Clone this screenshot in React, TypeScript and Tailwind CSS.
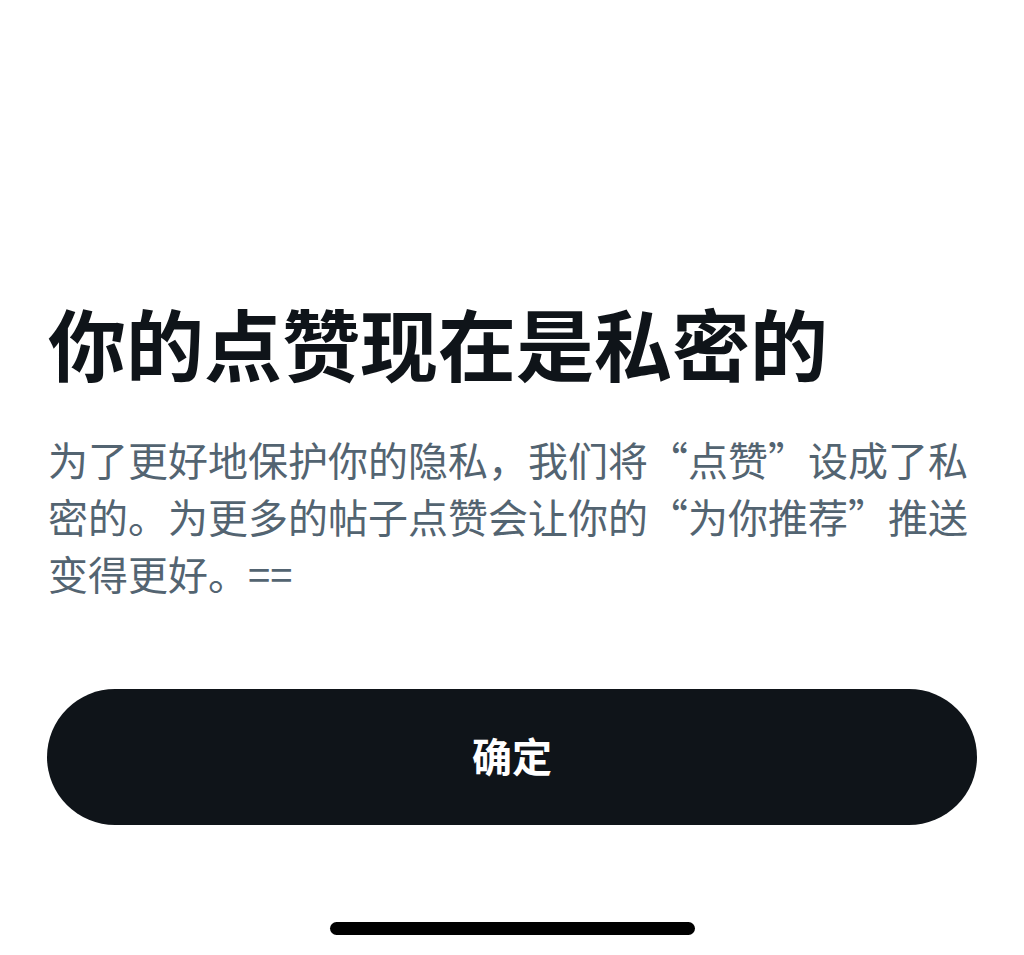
export default function App() {
  return (
    <div
      className="w-[1024px] h-[955px] bg-white flex flex-col overflow-hidden"
      style={{ fontFamily: '"Noto Sans CJK SC", "Noto Sans", sans-serif' }}
    >
      <div className="px-12 flex flex-col">
        <h1 className="mt-[303px] text-[78px] leading-[78px] font-bold text-[#0f1419]">
          你的点赞现在是私密的
        </h1>
        <p className="mt-[50px] text-[40px] leading-[57px] font-normal text-[#536471]">
          为了更好地保护你的隐私，我们将“点赞”设成了私密的。为更多的帖子点赞会让你的“为你推荐”推送变得更好。==
        </p>
      </div>
      <div className="px-[47px] mt-[87px]">
        <button className="w-full h-[136px] rounded-full bg-[#0f1419] text-white text-[40px] leading-[40px] font-bold flex items-center justify-center pb-[4px]">
          确定
        </button>
      </div>
      <div className="mt-[97px] flex justify-center">
        <div className="w-[365px] h-[13px] rounded-full bg-black" />
      </div>
    </div>
  );
}
